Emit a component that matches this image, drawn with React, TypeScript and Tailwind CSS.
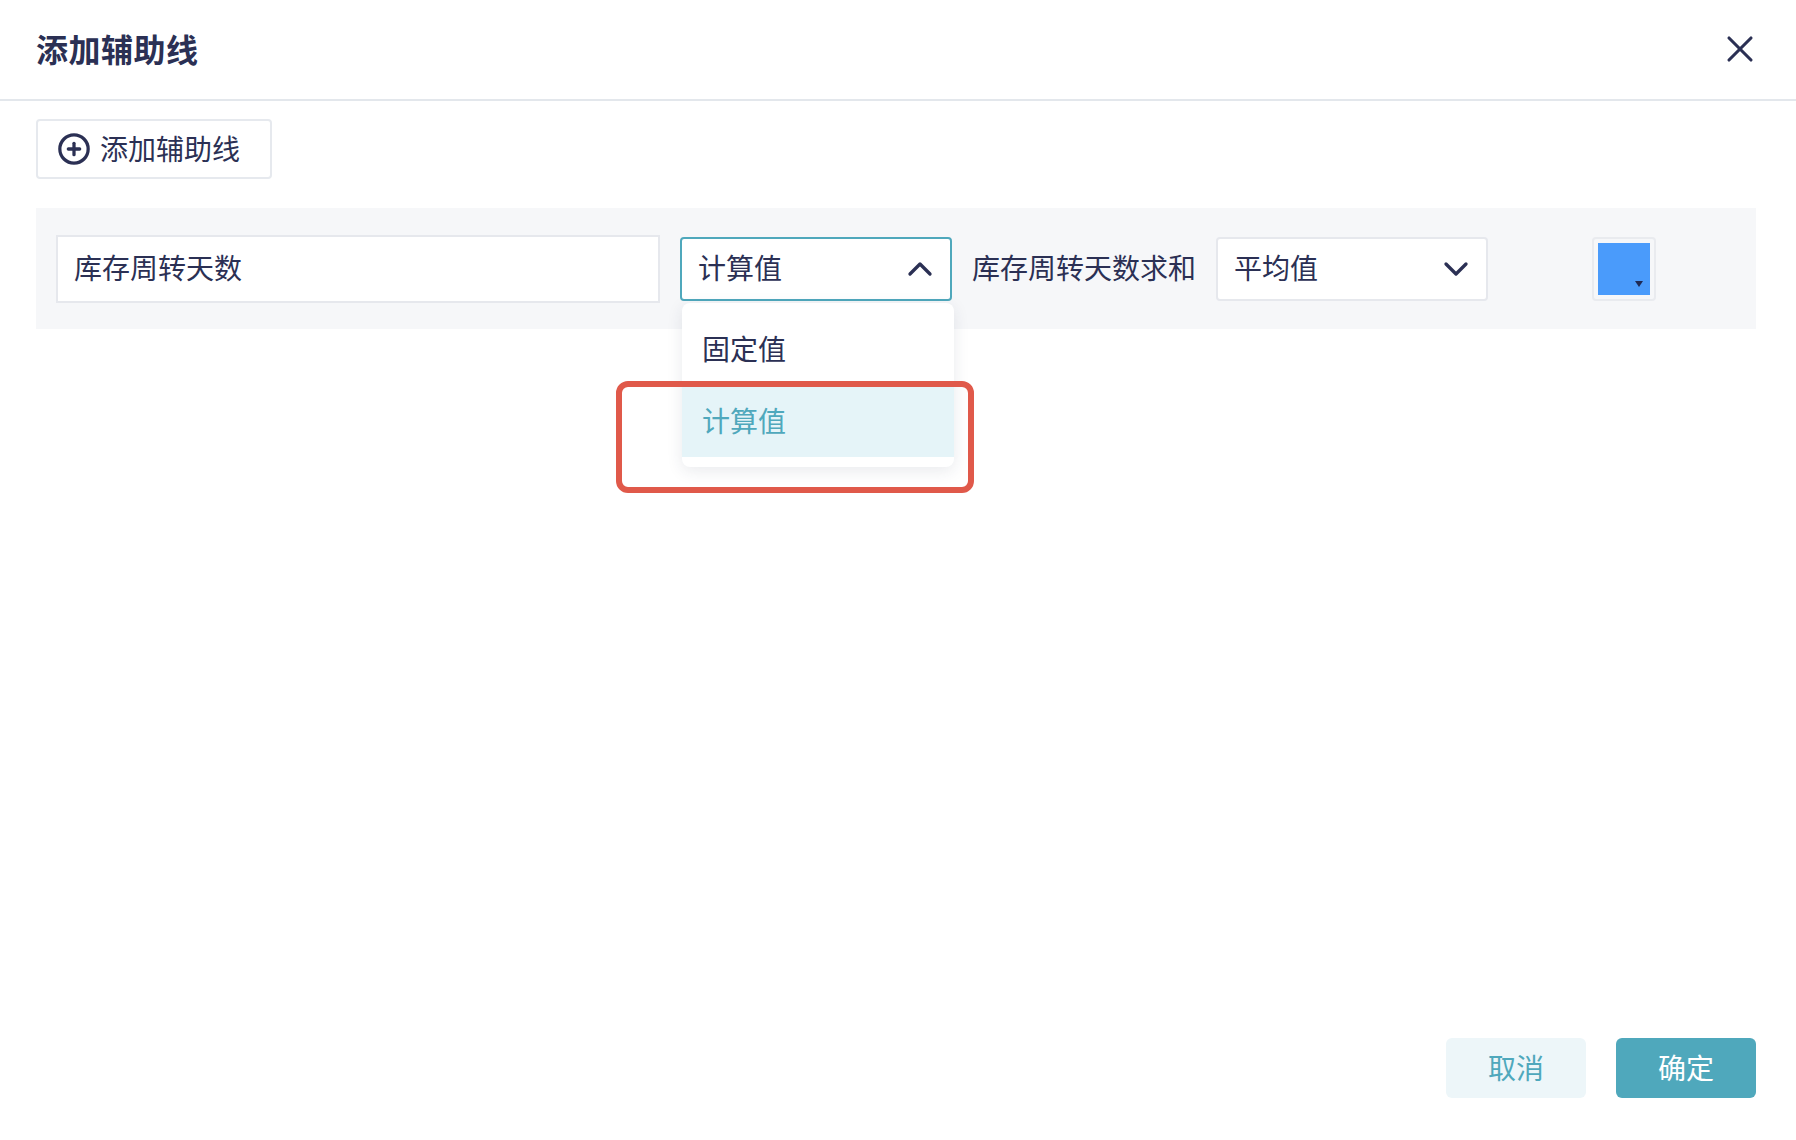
import React from 'react';
import { ChevronDown, ChevronUp, CirclePlus, X } from 'lucide-react';

const App: React.FC = () => {
  return (
    <div className="flex h-[1140px] w-full flex-col overflow-hidden bg-white font-['Noto_Sans_CJK_SC',sans-serif] text-[28px] text-[#2b3054]">
      {/* Header */}
      <div className="flex h-[101px] shrink-0 items-center justify-between border-b-2 border-[#e3e7ec] pl-9 pr-10">
        <h1 className="pb-[4px] text-[32px] font-bold leading-none tracking-[0.5px]">添加辅助线</h1>
        <X className="-mr-[6px] mb-[2px] h-11 w-11" strokeWidth={1.7} />
      </div>

      {/* Body */}
      <div className="flex-1 pl-9 pr-10 pt-[18px]">
        <button className="flex h-[60px] w-[236px] items-center gap-[9px] rounded border-2 border-[#e6e9ee] pl-[19px]">
          <CirclePlus className="h-[34px] w-[34px]" strokeWidth={2.3} />
          <span className="pb-[3px] leading-none">添加辅助线</span>
        </button>

        <div className="mt-[29px] flex h-[121px] items-center bg-[#f6f7f9] pl-5 pt-[1px]">
          <input
            defaultValue="库存周转天数"
            className="h-[68px] w-[604px] border-2 border-[#e6e8ed] bg-white pb-[5px] pl-4 text-[#2b3054] outline-none"
          />

          <div className="relative ml-5">
            <div className="flex h-[64px] w-[272px] items-center justify-between rounded border-2 border-[#4fa8bc] bg-white pl-4 pr-[10px]">
              <span className="pb-[4px] leading-none">计算值</span>
              <ChevronUp className="h-10 w-10" strokeWidth={2} />
            </div>

            {/* Dropdown */}
            <div className="absolute left-[2px] top-[66px] w-[272px] rounded-lg bg-white py-[10px] shadow-[0_4px_16px_rgba(40,50,80,0.1)]">
              <div className="flex h-[72px] items-center pb-[2px] pl-5 leading-none">固定值</div>
              <div className="flex h-[72px] items-center bg-[#e5f4f8] pb-[2px] pl-5 leading-none text-[#4fa8bc]">计算值</div>
            </div>

            {/* Annotation */}
            <div className="absolute left-[-64px] top-[144px] h-[112px] w-[358px] rounded-xl border-[6px] border-[#e0594a]" />
          </div>

          <span className="ml-5 pb-[4px] leading-none">库存周转天数求和</span>

          <div className="ml-5 flex h-[64px] w-[272px] items-center justify-between rounded border-2 border-[#e6e8ed] bg-white pl-4 pr-[10px]">
            <span className="pb-[4px] leading-none">平均值</span>
            <ChevronDown className="h-10 w-10" strokeWidth={2} />
          </div>

          <div className="ml-[104px] flex h-[64px] w-[64px] items-center justify-center rounded border-2 border-[#e9ebef] bg-[#f6f7f9]">
            <div className="relative h-[52px] w-[52px] bg-[#4a9bfb]">
              <svg className="absolute bottom-[8px] right-[7px]" width="8" height="6" viewBox="0 0 8 6">
                <path d="M0 0h8L4 6z" fill="#1f2a55" />
              </svg>
            </div>
          </div>
        </div>
      </div>

      {/* Footer */}
      <div className="flex shrink-0 justify-end gap-[30px] pb-[42px] pr-10">
        <button className="h-[60px] w-[140px] rounded-md bg-[#edf6f9] pb-[2px] text-[#4fa8bc]">取消</button>
        <button className="h-[60px] w-[140px] rounded-md bg-[#4fa8bc] pb-[2px] text-white">确定</button>
      </div>
    </div>
  );
};

export default App;
